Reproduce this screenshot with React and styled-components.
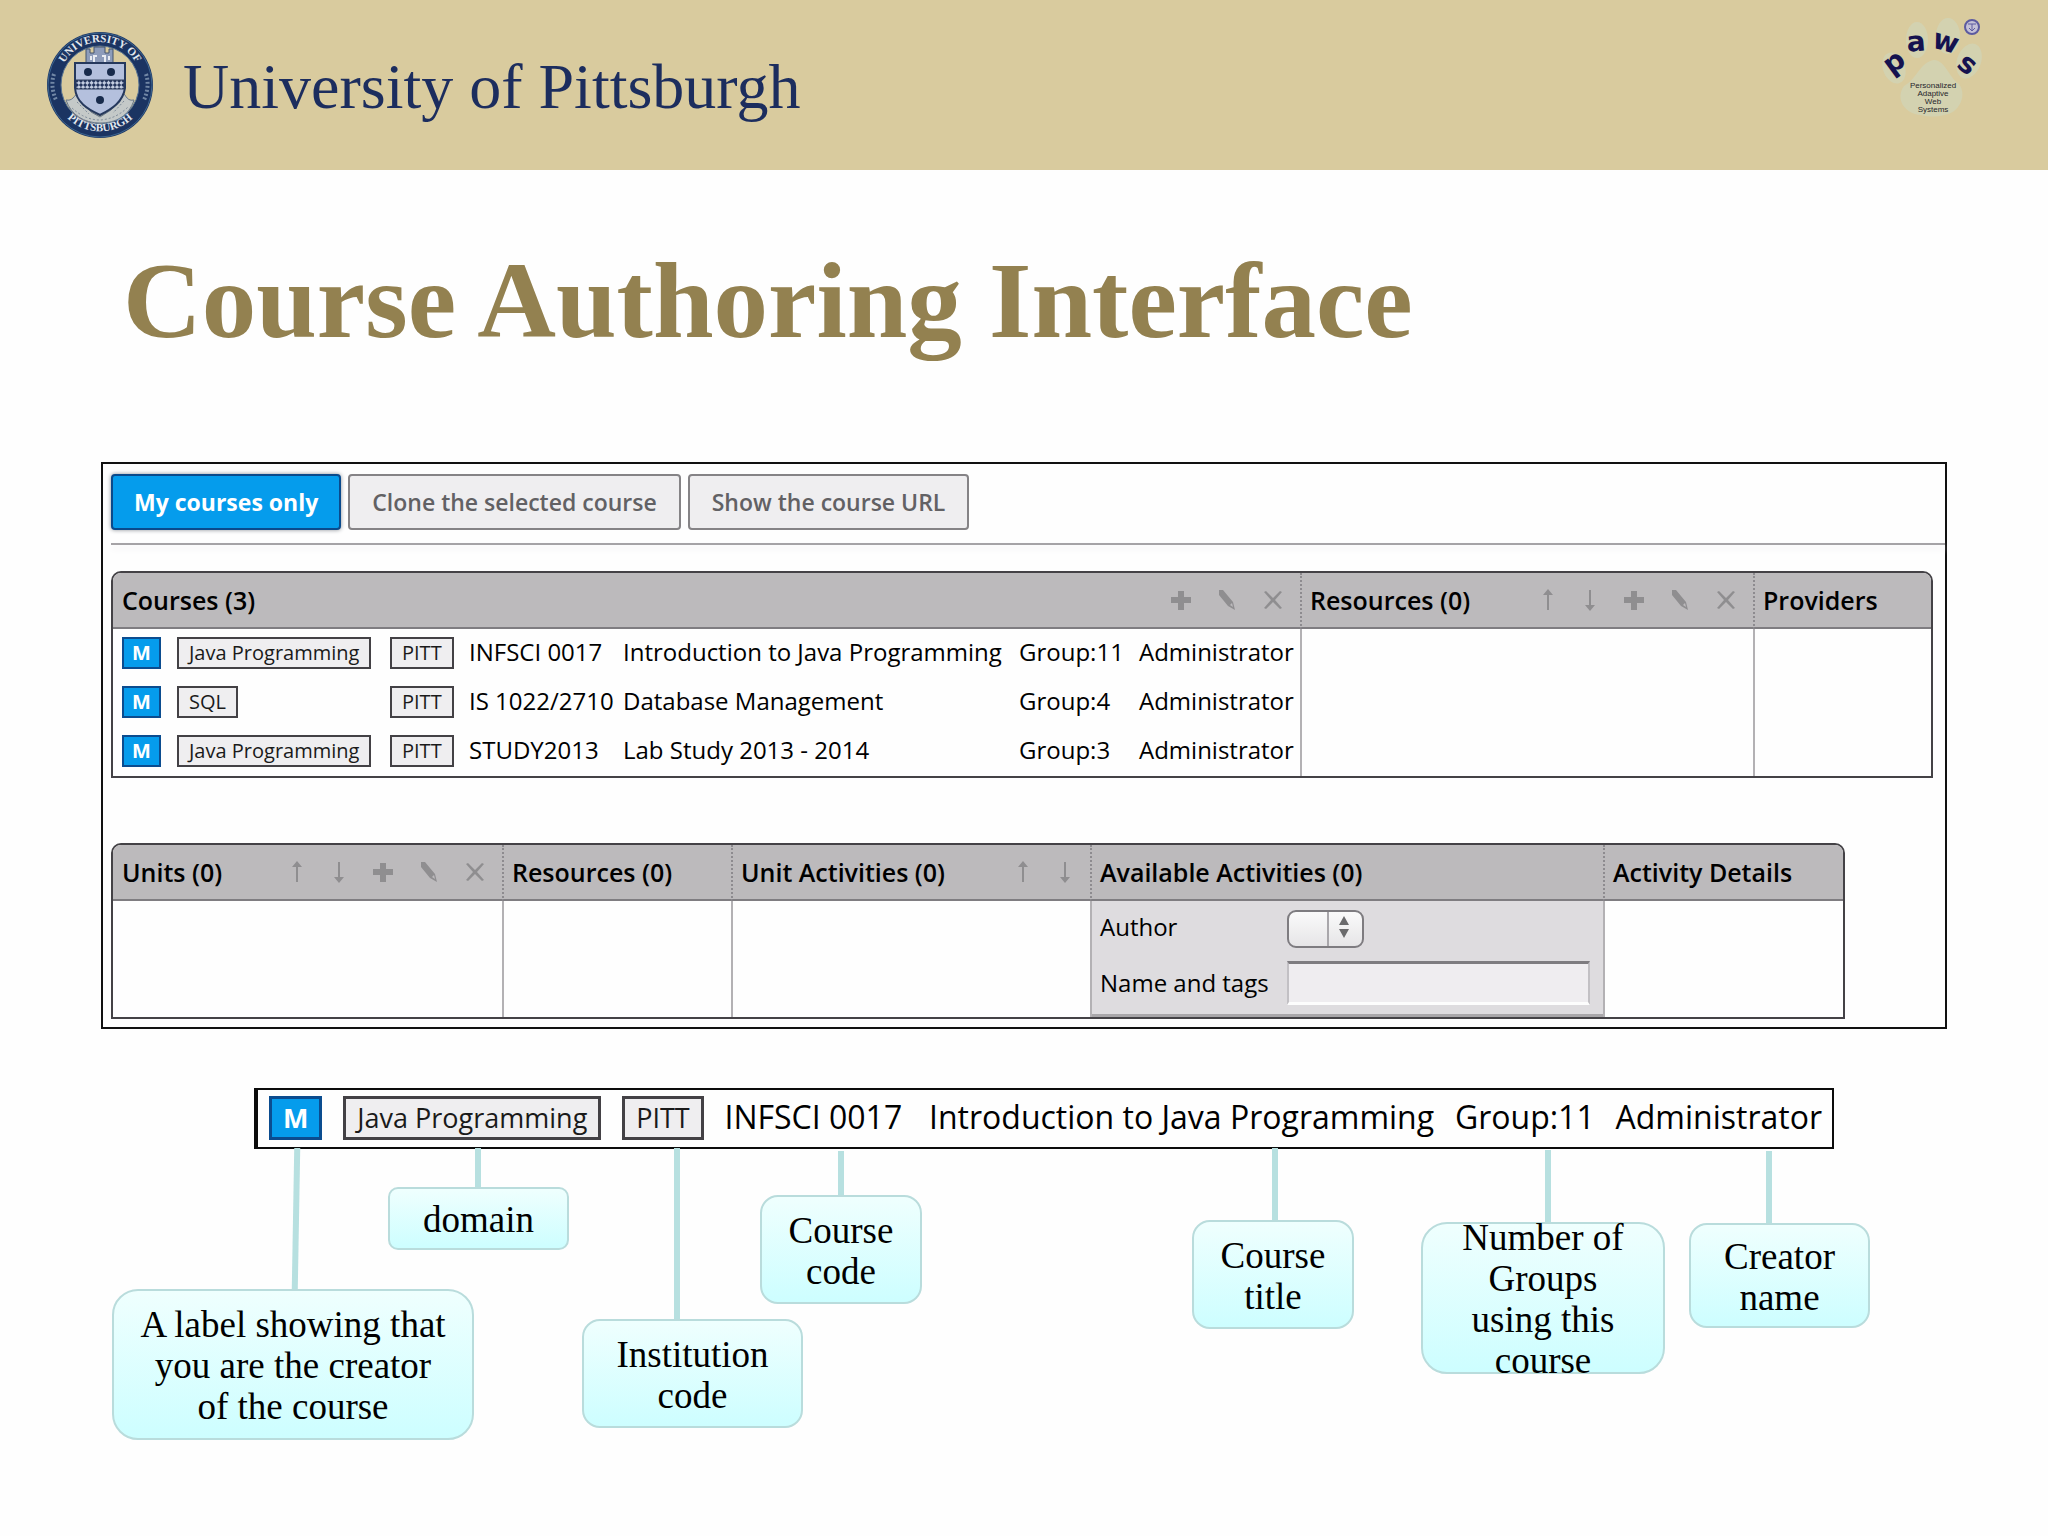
import React from 'react';
import styled, { createGlobalStyle, css } from 'styled-components';

const courses = [
  { domain: 'Java Programming', school: 'PITT', code: 'INFSCI 0017', title: 'Introduction to Java Programming', group: 'Group:11', creator: 'Administrator' },
  { domain: 'SQL', school: 'PITT', code: 'IS 1022/2710', title: 'Database Management', group: 'Group:4', creator: 'Administrator' },
  { domain: 'Java Programming', school: 'PITT', code: 'STUDY2013', title: 'Lab Study 2013 - 2014', group: 'Group:3', creator: 'Administrator' },
];

// x is on the 2048 wide slide, top is measured from the top of the diagram
const SLIDE = 2048;
const callouts = [
  { text: 'A label showing that you are the creator of the course', x: 112, top: 260, width: 362, height: 151, radius: 26, pad: 24 },
  { text: 'domain', x: 388, top: 158, width: 181, height: 63, radius: 10, pad: 8 },
  { text: 'Institution code', x: 582, top: 290, width: 221, height: 109, radius: 18, pad: 20 },
  { text: 'Course code', x: 760, top: 166, width: 162, height: 109, radius: 18, pad: 20 },
  { text: 'Course title', x: 1192, top: 191, width: 162, height: 109, radius: 18, pad: 20 },
  { text: 'Number of Groups using this course', x: 1421, top: 193, width: 244, height: 152, radius: 26, pad: 32 },
  { text: 'Creator name', x: 1689, top: 194, width: 181, height: 105, radius: 18, pad: 20 },
];

const stems = [
  { x: 293, top: 119, height: 142, lean: true },
  { x: 475, top: 119, height: 40 },
  { x: 674, top: 119, height: 172 },
  { x: 838, top: 122, height: 45 },
  { x: 1272, top: 119, height: 73 },
  { x: 1545, top: 121, height: 73 },
  { x: 1766, top: 122, height: 73 },
];

const icons = {
  up: <path d="M12 1 L17 7 H13 V22 H11 V7 H7 Z" />,
  down: <path d="M12 23 L7 17 H11 V2 H13 V17 H17 Z" />,
  add: <path d="M9 3 H15 V9 H22 V15 H15 V22 H9 V15 H2 V9 H9 Z" />,
  edit: <path d="M4 2 L8 2 L18 14 L20 22 L13 18 L4 7 Z M15 17 L18 19 L17 15 Z" fillRule="evenodd" />,
  remove: <path d="M3 4 L5 3 L12 10 L19 3 L21 4 L14 12 L21 20 L19 21 L12 14 L5 21 L3 20 L10 12 Z" />,
};

const labels = { up: 'Move up', down: 'Move down', add: 'Add', edit: 'Edit', remove: 'Remove' };

const Tools = ({ names }) => (
  <ToolRow>
    {names.map((name) => (
      <ToolButton key={name} type='button' aria-label={labels[name]} $narrow={name === 'up' || name === 'down'}>
        <svg width='24' height='24' viewBox='0 0 24 24' fill='currentColor'>{icons[name]}</svg>
      </ToolButton>
    ))}
  </ToolRow>
);

const Heading = ({ label, count, tools = [] }) => (
  <HeadCell scope='col'>
    <HeadInner>
      <span>
        {label}
        {count !== undefined && ` (${count})`}
      </span>
      {tools.length > 0 && <Tools names={tools} />}
    </HeadInner>
  </HeadCell>
);

const Seal = () => (
  <svg width='106' height='106' viewBox='0 0 106 106' role='img' aria-label='University seal'>
    <defs>
      <path id='seal-top' d='M 13 60 A 41 41 0 1 1 93 60' />
      <path id='seal-bottom' d='M 7 62 A 47 47 0 0 0 99 62' />
      <pattern id='checks' width='6' height='6' patternUnits='userSpaceOnUse' patternTransform='rotate(45)'>
        <rect width='6' height='6' fill='#c3cde0' />
        <rect width='3' height='3' fill='#24355c' />
        <rect x='3' y='3' width='3' height='3' fill='#24355c' />
      </pattern>
    </defs>
    <circle cx='53' cy='53' r='53' fill='#1b3462' />
    <circle cx='53' cy='53' r='52' fill='none' stroke='#3d6690' />
    <circle cx='53' cy='53' r='39' fill='#d9cb9e' stroke='#5a7593' />
    <path d='M19 68 C28 70 28 58 33 63 L44 80 L53 85 L64 78 L74 62 C79 59 78 70 87 68 C82 84 69 91 53 91 C37 91 24 83 19 68 Z' fill='#c4c9c8' stroke='#68788b' />
    <path d='M25 76 Q38 88 53 88 Q69 87 81 75 M30 70 L42 82 M77 69 L66 81' fill='none' stroke='#7d8998' strokeDasharray='2 2' />
    <path d='M39 31 V17 H43 V21 H47 V15 H58 V21 H62 V17 H66 V31 Z' fill='#8d9cba' stroke='#44556f' />
    <path d='M47 30 V24 H50 M58 30 V24 H55 M44 24 V28 M62 24 V28' fill='none' stroke='#e8ecf3' strokeWidth='2' />
    <path d='M28 31 H78 V56 C76 70 65 77 53 83 C40 77 29 70 28 56 Z' fill='#b4c0dd' stroke='#26395d' strokeWidth='2' />
    <rect x='29' y='48' width='48' height='9' fill='url(#checks)' />
    <path d='M29 48 H77 M29 57 H77' stroke='#30415d' />
    <circle cx='41' cy='40' r='4' fill='#182b4c' />
    <circle cx='64' cy='40' r='4' fill='#182b4c' />
    <circle cx='53' cy='68' r='4' fill='#182b4c' />
    <path d='M7 42 Q3 54 9 68 M99 42 Q103 54 97 68' fill='none' stroke='#7187a5' strokeWidth='4' strokeDasharray='2 2' />
    <SealText><textPath href='#seal-top' startOffset='50%' textAnchor='middle'>UNIVERSITY OF</textPath></SealText>
    <SealText><textPath href='#seal-bottom' startOffset='50%' textAnchor='middle'>PITTSBURGH</textPath></SealText>
  </svg>
);

const PawsLogo = () => (
  <svg width='120' height='130' viewBox='10 0 120 130' role='img' aria-label='PAWS'>
    <g fill='#d3d2b0'>
      <ellipse cx='34' cy='68' rx='11' ry='16' transform='rotate(-20 34 68)' />
      <ellipse cx='57' cy='40' rx='11' ry='18' />
      <ellipse cx='88' cy='36' rx='12' ry='18' />
      <ellipse cx='109' cy='61' rx='12' ry='18' transform='rotate(20 109 61)' />
      <path d='M74 60 C86 61 89 78 99 84 C108 96 98 114 84 115 C76 117 69 117 61 115 C44 114 35 98 44 86 C57 79 60 62 74 60 Z' />
    </g>
    <PawLetter x='37' y='70' transform='rotate(-36 37 66)'>p</PawLetter>
    <PawLetter x='56' y='51' transform='rotate(-4 56 42)'>a</PawLetter>
    <PawLetter x='86' y='51' transform='rotate(16 86 42)'>w</PawLetter>
    <PawLetter x='107' y='73' transform='rotate(38 107 65)'>s</PawLetter>
    <circle cx='112' cy='27' r='7' fill='#c5c1d6' stroke='#5c5aa0' strokeWidth='2' />
    <path d='M108 24 H116 M112 24 V31 M109 28 L112 31 L115 28' fill='none' stroke='#5c5aa0' />
    <PawCaption x='73' y='88'>Personalized</PawCaption>
    <PawCaption x='73' y='96'>Adaptive</PawCaption>
    <PawCaption x='73' y='104'>Web</PawCaption>
    <PawCaption x='73' y='112'>Systems</PawCaption>
  </svg>
);

const App = () => {
  const sample = courses[0];
  return (
    <>
      <GlobalStyle />
      <Banner>
        <Brand>
          <Seal />
          <BrandName>University of Pittsburgh</BrandName>
        </Brand>
        <PawsLogo />
      </Banner>

      <Title>Course Authoring Interface</Title>

      <Panel>
        <ButtonBar>
          <BarButton type='button' $active>My courses only</BarButton>
          <BarButton type='button'>Clone the selected course</BarButton>
          <BarButton type='button'>Show the course URL</BarButton>
        </ButtonBar>
        <Rule />

        <Frame $right={12}>
          <Grid>
            <colgroup>
              <Col />
              <Col $width={453} />
              <Col $width={178} />
            </colgroup>
            <thead>
              <tr>
                <Heading label='Courses' count={3} tools={['add', 'edit', 'remove']} />
                <Heading label='Resources' count={0} tools={['up', 'down', 'add', 'edit', 'remove']} />
                <Heading label='Providers' />
              </tr>
            </thead>
            <tbody>
              <tr>
                <BodyCell>
                  <CourseTable>
                    <colgroup>
                      <Col $width={64} />
                      <Col $width={213} />
                      <Col $width={79} />
                      <Col $width={154} />
                      <Col $width={396} />
                      <Col $width={120} />
                      <Col />
                    </colgroup>
                    <tbody>
                      {courses.map((course) => (
                        <tr key={course.code}>
                          <td><Tag $mine>M</Tag></td>
                          <td><Tag>{course.domain}</Tag></td>
                          <td><Tag>{course.school}</Tag></td>
                          <td>{course.code}</td>
                          <td>{course.title}</td>
                          <td>{course.group}</td>
                          <td>{course.creator}</td>
                        </tr>
                      ))}
                    </tbody>
                  </CourseTable>
                </BodyCell>
                <BodyCell />
                <BodyCell />
              </tr>
            </tbody>
          </Grid>
        </Frame>

        <Frame $right={100} $spaced>
          <Grid>
            <colgroup>
              <Col $width={389} />
              <Col $width={229} />
              <Col $width={359} />
              <Col />
              <Col $width={240} />
            </colgroup>
            <thead>
              <tr>
                <Heading label='Units' count={0} tools={['up', 'down', 'add', 'edit', 'remove']} />
                <Heading label='Resources' count={0} />
                <Heading label='Unit Activities' count={0} tools={['up', 'down']} />
                <Heading label='Available Activities' count={0} />
                <Heading label='Activity Details' />
              </tr>
            </thead>
            <tbody>
              <tr>
                <BodyCell />
                <BodyCell />
                <BodyCell />
                <BodyCell>
                  <Filter>
                    <label htmlFor='author'>Author</label>
                    <SelectBox>
                      <select id='author' defaultValue=''>
                        <option value='' />
                      </select>
                      <svg width='10' height='22' viewBox='0 0 10 22' fill='#6a6a6c'>
                        <path d='M5 0 L10 9 H0 Z M5 22 L0 13 H10 Z' />
                      </svg>
                    </SelectBox>
                    <label htmlFor='tags'>Name and tags</label>
                    <TagsInput id='tags' type='text' />
                  </Filter>
                </BodyCell>
                <BodyCell />
              </tr>
            </tbody>
          </Grid>
        </Frame>
      </Panel>

      <Diagram>
        <Strip>
          <Tag $mine $large>M</Tag>
          <Tag $large>{sample.domain}</Tag>
          <Tag $large>{sample.school}</Tag>
          <StripText>{sample.code}</StripText>
          <StripText $wide>{sample.title}</StripText>
          <StripText>{sample.group}</StripText>
          <StripText>{sample.creator}</StripText>
        </Strip>
        {stems.map((stem) => (
          <Stem key={stem.x} $x={stem.x} $top={stem.top} $height={stem.height} $lean={stem.lean} />
        ))}
        {callouts.map((box) => (
          <Callout key={box.text} $box={box}>{box.text}</Callout>
        ))}
      </Diagram>
    </>
  );
};

const GlobalStyle = createGlobalStyle`
  * {
    box-sizing: border-box;
  }

  body {
    margin: 0;
    background: #fefefe;
    color: #000;
    font-family: 'Open Sans', 'Noto Sans', sans-serif;
    font-size: 24px;
    line-height: 32px;
  }
`;

const Banner = styled.header`
  display: flex;
  align-items: center;
  justify-content: space-between;
  height: 170px;
  padding: 0 58px 0 47px;
  background: #d9cb9e;

  > svg {
    align-self: flex-start;
  }
`;

const Brand = styled.div`
  display: flex;
  align-items: center;
  gap: 30px;
`;

const BrandName = styled.span`
  padding-top: 4px;
  color: #1c2d5e;
  font-family: 'Liberation Serif', serif;
  font-size: 64px;
  line-height: 64px;
`;

const SealText = styled.text`
  fill: #e3e8ee;
  font-family: 'Liberation Serif', serif;
  font-size: 11px;
  font-weight: bold;
`;

const PawLetter = styled.text`
  fill: #15124f;
  font-family: 'DejaVu Sans', sans-serif;
  font-size: 28px;
  font-weight: bold;
  text-anchor: middle;
`;

const PawCaption = styled.text`
  fill: #26262c;
  font-family: 'Liberation Sans', sans-serif;
  font-size: 8px;
  text-anchor: middle;
`;

const Title = styled.h1`
  margin: 71px 123px 101px;
  color: #938150;
  font-family: 'Liberation Serif', serif;
  font-size: 109px;
  font-weight: bold;
  line-height: 120px;
`;

const Panel = styled.main`
  margin: 0 101px;
  padding: 10px 0 8px 8px;
  border: 2px solid #111;
`;

const ButtonBar = styled.div`
  display: flex;
  gap: 7px;
`;

const BarButton = styled.button`
  height: 56px;
  padding: 0 22px;
  border: 2px solid #858386;
  border-radius: 4px;
  background: #efeef0;
  color: #626164;
  font: inherit;
  font-size: 23px;
  font-weight: 600;
  white-space: nowrap;

  ${({ $active }) => $active && css`
    padding: 0 21px;
    border-color: #0a4a8c;
    background: #059cec;
    box-shadow: 0 0 4px #8a8f96;
    color: #fff;
    font-weight: 700;
  `}
`;

const Rule = styled.hr`
  height: 2px;
  margin: 13px 0 26px;
  border: 0;
  background: #a5a3a6;
  box-shadow: 0 4px 6px #f0eff1;
`;

const Frame = styled.div`
  margin-top: ${({ $spaced }) => ($spaced ? '65px' : '0')};
  margin-right: ${({ $right }) => $right}px;
  overflow: hidden;
  border: 2px solid #444246;
  border-radius: 10px 10px 0 0;
`;

const Grid = styled.table`
  width: 100%;
  table-layout: fixed;
  border-spacing: 0;
`;

const Col = styled.col`
  width: ${({ $width }) => ($width ? `${$width}px` : 'auto')};
`;

const HeadCell = styled.th`
  height: 56px;
  padding: 0 4px 0 9px;
  border-bottom: 2px solid #7f7d81;
  background: #bcbabc;
  font-size: 25px;
  font-weight: 600;
  text-align: left;
  white-space: nowrap;

  & + & {
    padding-left: 8px;
    border-left: 2px dotted #8d8b8f;
  }
`;

const HeadInner = styled.div`
  display: flex;
  align-items: center;
  justify-content: space-between;
`;

const ToolRow = styled.div`
  display: flex;
`;

const ToolButton = styled.button`
  display: flex;
  justify-content: center;
  width: ${({ $narrow }) => ($narrow ? '42px' : '46px')};
  padding: 0;
  border: 0;
  background: none;
  color: #8f8e90;
`;

const BodyCell = styled.td`
  padding: 0;
  background: #fefefe;
  vertical-align: top;

  & + & {
    border-left: 2px solid #b3b1b4;
  }
`;

const CourseTable = styled.table`
  width: 100%;
  table-layout: fixed;
  border-spacing: 0;
  white-space: nowrap;

  td {
    height: 49px;
    padding: 0 0 3px;
  }

  td:first-child {
    padding-left: 9px;
  }
`;

const Tag = styled.span`
  display: inline-block;
  padding: 0 ${({ $mine }) => ($mine ? 8 : 10)}px;
  border: 2px solid ${({ $mine }) => ($mine ? '#0b4c8f' : '#434145')};
  background: ${({ $mine }) => ($mine ? '#059cec' : '#efeef0')};
  color: ${({ $mine }) => ($mine ? '#fff' : '#1a1a1a')};
  font-size: 20px;
  font-weight: ${({ $mine }) => ($mine ? 700 : 500)};
  line-height: 28px;
  vertical-align: middle;

  ${({ $large }) => $large && css`
    padding: 0 11px;
    border-width: 3px;
    font-size: 27px;
    line-height: 38px;
  `}
`;

const Filter = styled.div`
  display: grid;
  grid-template-columns: 178px 1fr;
  align-items: center;
  row-gap: 15px;
  height: 116px;
  padding: 7px 13px 9px 8px;
  border-bottom: 3px solid #a9a7aa;
  background: #dedcdf;
`;

const SelectBox = styled.div`
  position: relative;
  width: 77px;
  height: 38px;
  margin-left: 9px;

  select {
    width: 100%;
    height: 100%;
    border: 2px solid #7e7c80;
    border-radius: 9px;
    appearance: none;
    background:
      linear-gradient(#a9a7ab, #a9a7ab) 38px 0 / 2px 100% no-repeat,
      linear-gradient(#fafafa, #e6e5e7);
  }

  svg {
    position: absolute;
    top: 8px;
    right: 15px;
    pointer-events: none;
  }
`;

const TagsInput = styled.input`
  width: calc(100% - 9px);
  height: 44px;
  margin-left: 9px;
  padding: 4px 8px;
  border: 2px solid #c2c0c4;
  border-top: 3px solid #7e7c80;
  border-bottom: 3px solid #fdfdfd;
  background: #efedf0;
  font: inherit;
`;

const Diagram = styled.section`
  position: relative;
  height: 448px;
  padding: 59px 214px 0 254px;
`;

const Strip = styled.div`
  display: flex;
  align-items: center;
  justify-content: space-between;
  height: 61px;
  padding: 0 10px 2px 11px;
  border: 2px solid #0c0c0c;
  border-left-width: 4px;
`;

const StripText = styled.span`
  margin-left: ${({ $wide }) => ($wide ? '6px' : '0')};
  padding-bottom: 2px;
  font-size: 32px;
  line-height: 40px;
  white-space: nowrap;
`;

const Stem = styled.div`
  position: absolute;
  top: ${({ $top }) => $top}px;
  left: ${({ $x }) => ($x / SLIDE) * 100}%;
  width: 6px;
  height: ${({ $height }) => $height}px;
  background: #b7e0e0;
  transform: ${({ $lean }) => ($lean ? 'rotate(1deg)' : 'none')};
`;

const Callout = styled.div`
  position: absolute;
  top: ${({ $box }) => $box.top}px;
  left: ${({ $box }) => ($box.x / SLIDE) * 100}%;
  display: flex;
  align-items: center;
  justify-content: center;
  width: ${({ $box }) => $box.width}px;
  height: ${({ $box }) => $box.height}px;
  padding: 2px ${({ $box }) => $box.pad}px 0;
  border: 2px solid #b9dcdc;
  border-radius: ${({ $box }) => $box.radius}px;
  background: linear-gradient(#effffe, #cdfeff);
  font-family: 'Liberation Serif', serif;
  font-size: 37px;
  line-height: 41px;
  text-align: center;
`;

export default App;
